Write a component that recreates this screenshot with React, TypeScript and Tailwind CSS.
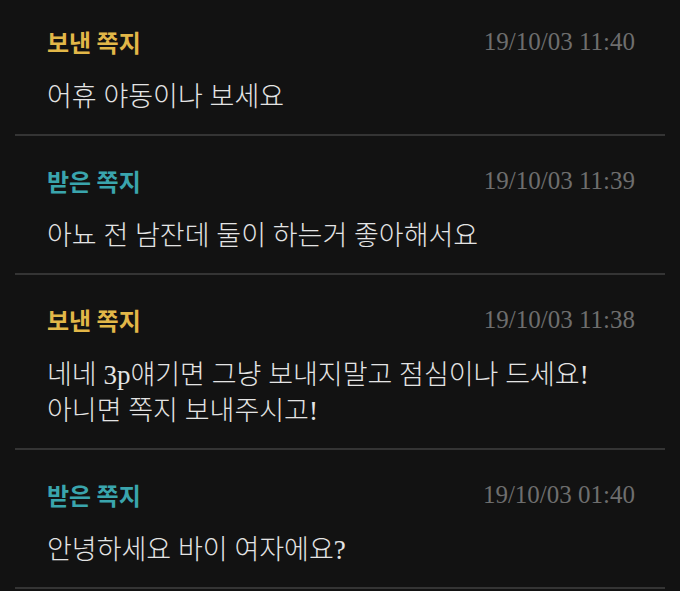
const notes = [
  { kind: "sent", date: "19/10/03 11:40", lines: ["어휴 야동이나 보세요"] },
  { kind: "received", date: "19/10/03 11:39", lines: ["아뇨 전 남잔데 둘이 하는거 좋아해서요"] },
  {
    kind: "sent",
    date: "19/10/03 11:38",
    lines: ["네네 3p얘기면 그냥 보내지말고 점심이나 드세요!", "아니면 쪽지 보내주시고!"],
  },
  { kind: "received", date: "19/10/03 01:40", lines: ["안녕하세요 바이 여자에요?"] },
];

export default function App() {
  return (
    <div className="w-[680px] h-[591px] overflow-hidden bg-[#121212]">
      <div className="-mt-[3px]">
        {notes.map((note, i) => (
          <div key={i} className="mx-[15px] border-b-2 border-[#343434]">
            <div className="px-[32px] pt-[28px] pb-[19px]">
              <div className="flex items-center justify-between h-[34px]">
                <span
                  className={
                    "text-[24px] font-bold font-['Noto_Sans_CJK_KR',sans-serif] " +
                    (note.kind === "sent" ? "text-[#e2b748]" : "text-[#3aa5ad]")
                  }
                >
                  {note.kind === "sent" ? "보낸 쪽지" : "받은 쪽지"}
                </span>
                <span className="text-[25px] text-[#6e6e6e] font-['Liberation_Serif',serif] mr-[-2px]">
                  {note.date}
                </span>
              </div>
              <div className="mt-[20px] text-[27px] leading-[36px] text-[#e4e4e4] font-light font-['Liberation_Serif','Noto_Sans_CJK_KR',serif]">
                {note.lines.map((l, j) => (
                  <div key={j}>{l}</div>
                ))}
              </div>
            </div>
          </div>
        ))}
      </div>
    </div>
  );
}
